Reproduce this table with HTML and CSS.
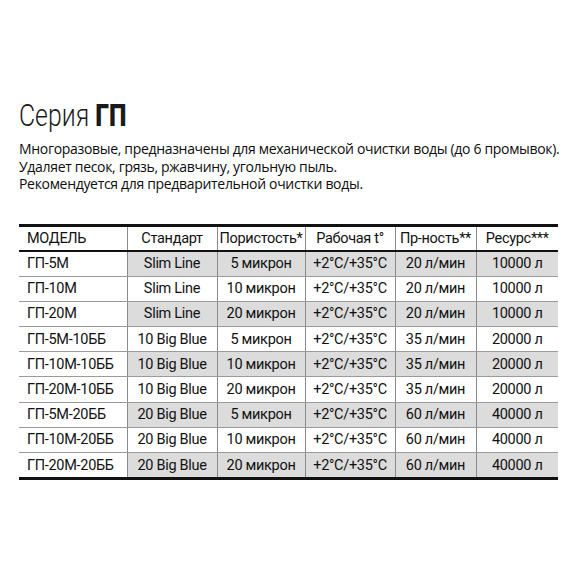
FILE: index.html
```html
<!DOCTYPE html>
<html lang="ru">
<head>
<meta charset="utf-8">
<link rel="stylesheet" href="styles.css">
</head>
<body>
<main class="page">
  <h1 class="title"><span class="title-text">Серия <b>ГП</b></span></h1>
  <p class="desc">Многоразовые, предназначены для механической очистки воды (до 6 промывок).<br>Удаляет песок, грязь, ржавчину, угольную пыль.<br>Рекомендуется для предварительной очистки воды.</p>
  <table class="spec">
    <colgroup>
      <col class="c1"><col class="c2"><col class="c3"><col class="c4"><col class="c5"><col class="c6">
    </colgroup>
    <thead>
      <tr><th>МОДЕЛЬ</th><th>Стандарт</th><th>Пористость*</th><th>Рабочая t°</th><th>Пр-ность**</th><th>Ресурс***</th></tr>
    </thead>
    <tbody>
      <tr class="alt"><td>ГП-5М</td><td>Slim Line</td><td>5 микрон</td><td>+2°C/+35°C</td><td>20 л/мин</td><td>10000 л</td></tr>
      <tr><td>ГП-10М</td><td>Slim Line</td><td>10 микрон</td><td>+2°C/+35°C</td><td>20 л/мин</td><td>10000 л</td></tr>
      <tr class="alt"><td>ГП-20М</td><td>Slim Line</td><td>20 микрон</td><td>+2°C/+35°C</td><td>20 л/мин</td><td>10000 л</td></tr>
      <tr><td>ГП-5М-10ББ</td><td>10 Big Blue</td><td>5 микрон</td><td>+2°C/+35°C</td><td>35 л/мин</td><td>20000 л</td></tr>
      <tr class="alt"><td>ГП-10М-10ББ</td><td>10 Big Blue</td><td>10 микрон</td><td>+2°C/+35°C</td><td>35 л/мин</td><td>20000 л</td></tr>
      <tr><td>ГП-20М-10ББ</td><td>10 Big Blue</td><td>20 микрон</td><td>+2°C/+35°C</td><td>35 л/мин</td><td>20000 л</td></tr>
      <tr class="alt"><td>ГП-5М-20ББ</td><td>20 Big Blue</td><td>5 микрон</td><td>+2°C/+35°C</td><td>60 л/мин</td><td>40000 л</td></tr>
      <tr><td>ГП-10М-20ББ</td><td>20 Big Blue</td><td>10 микрон</td><td>+2°C/+35°C</td><td>60 л/мин</td><td>40000 л</td></tr>
      <tr class="alt"><td>ГП-20М-20ББ</td><td>20 Big Blue</td><td>20 микрон</td><td>+2°C/+35°C</td><td>60 л/мин</td><td>40000 л</td></tr>
    </tbody>
  </table>
</main>
</body>
</html>
```

FILE: styles.css
```css
html, body {
  margin: 0;
  padding: 0;
  background: #ffffff;
  color: #111111;
}
.page {
  padding: 98px 12px 0 19px;
}
.title {
  margin: 0;
  font-family: "Roboto", sans-serif;
  font-weight: 300;
  font-size: 31px;
  line-height: 36px;
  color: #1a1a1a;
}
.title-text {
  display: inline-block;
  transform: scaleX(0.8);
  transform-origin: left center;
  white-space: nowrap;
}
.title b {
  font-weight: 900;
}
.desc {
  margin: 6px 0 0 0;
  font-family: "Open Sans", sans-serif;
  font-size: 14px;
  letter-spacing: -0.32px;
  line-height: 17.5px;
  color: #0d0d0d;
  white-space: nowrap;
}
.spec {
  margin-top: 31px;
  width: 539px;
  table-layout: fixed;
  border-collapse: collapse;
  font-family: "Roboto", sans-serif;
  font-size: 14.5px;
  letter-spacing: -0.3px;
  color: #111111;
  border-top: 3px solid #111111;
  border-bottom: 3px solid #111111;
}
.c1 { width: 108px; }
.c2 { width: 90px; }
.c3 { width: 88px; }
.c4 { width: 90px; }
.c5 { width: 81px; }
.c6 { width: 82px; }
.spec th, .spec td {
  padding: 0 2px;
  text-align: center;
  font-weight: 400;
  white-space: nowrap;
  border-left: 1px solid #8a8a8a;
}
.spec th:first-child, .spec td:first-child {
  border-left: none;
  text-align: left;
  padding-left: 8px;
}
.spec th {
  height: 23px;
  border-bottom: 2px solid #111111;
}
.spec td {
  height: 24.2px;
  border-bottom: 1px solid #9a9a9a;
}
.spec tr:last-child td {
  border-bottom: none;
}
.spec tr.alt td {
  background: #dcdcdc;
}
.spec tr.alt td:first-child {
  background: #ffffff;
}
```
